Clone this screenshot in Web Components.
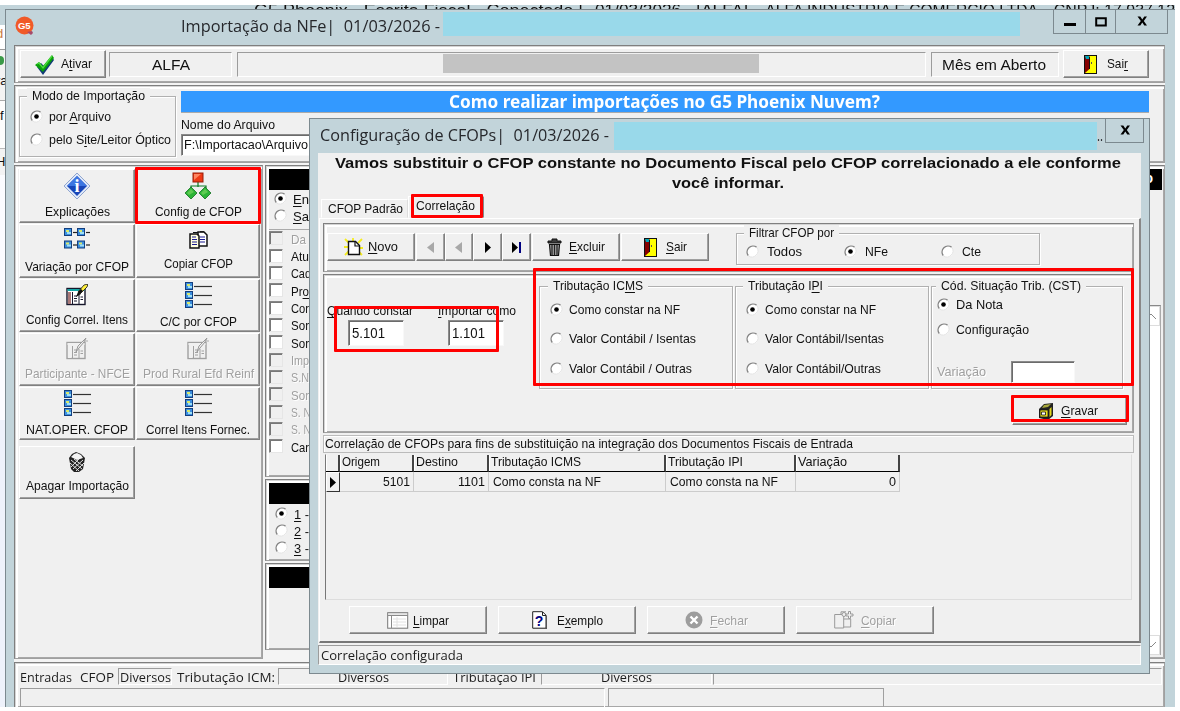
<!DOCTYPE html>
<html lang="pt-BR">
<head>
<meta charset="utf-8">
<title>Importação da NFe</title>
<style>
  html, body { margin: 0; background: #fff; overflow: hidden; }
</style>
</head>
<body>
<erp-desktop></erp-desktop>

<script>
const line3 = `
  ${[1, 10, 19].map((y) => `
    <rect x=".5" y="${y - 0.5}" width="7" height="7" fill="#3c8fe0" stroke="#143f7e"/>
    <rect x="2" y="${y + 1}" width="3" height="2" fill="#d8e86a"/>
    <rect x="3" y="${y + 3}" width="4" height="2" fill="#9fe0f5"/>
    <path d="M9 ${y + 3.5}H27" stroke="#333" stroke-width="1.2"/>`).join("")}`;

const form = (ink, paper, side, head) => `
  <rect x="1" y="4.5" width="18" height="16" fill="${paper}" stroke="${ink}" stroke-width="1.4"/>
  <rect x="1.5" y="5" width="17" height="2" fill="${head}"/>
  <rect x="2" y="8" width="3" height="12" fill="${side}"/>
  <path d="M6.5 8V20M13 11V20M8 12H11M8 14.500H11M8 17H11M14.500 13H17M14.500 15.500H17" stroke="${ink}"/>`;

const ICONS = {
  logo: ["0 0 20 20", `<circle cx="9.500" cy="9.500" r="9" fill="#f05a28"/><path d="M12 16l5-1 1 2-2 2z" fill="#a64a6a"/>
    <text x="9.300" y="13" font-family="Liberation Sans" font-weight="bold" font-size="9.500" text-anchor="middle" fill="#fff">G5</text>`],
  check: ["0 0 20 21", `<path d="M2 13l4-4 3 3L17 3l2 3L8 21z" fill="#123a78"/><path d="M0 11l4-3 4 4L17 1l2 3L8 18z" fill="#0aa00a"/><path d="M2 10l2-1 4 5L17 2" fill="none" stroke="#4bdc3e" stroke-width="1.300"/>`],
  door: ["0 0 13 19", `<rect x=".5" y=".5" width="12" height="18" fill="#ffff00" stroke="#111"/><path d="M1 1h4.500v13L1 18z" fill="#870000"/><path d="M1 1h4v3H2z" fill="#00a6b8"/><path d="M5.500 2v12" stroke="#111"/><rect x="7" y="7" width="1" height="2" fill="#555"/>`],
  info: ["0 0 28 28", `<path d="M14 1L27 14 14 27 1 14z" fill="#dfe8f8" stroke="#8fa5cf"/><path d="M14 4L24 14 14 24 4 14z" fill="#1846b8"/><path d="M14 4L24 14H4z" fill="#3c76e2"/>
    <text x="14" y="20" font-family="Liberation Serif" font-weight="bold" font-size="18" text-anchor="middle" fill="#fff">i</text>`],
  tree: ["0 0 26 28", `<path d="M13 10v5M6 18v-4h15v4" stroke="#0a7a22" stroke-width="1.200" fill="none"/><rect x="8" y="1" width="10" height="9" fill="#ee3a16" stroke="#981c08"/><path d="M9 2h7l-7 6z" fill="#ff8560"/>
    <path d="M6 15l6 6-6 6-6-6zM20 15l6 6-6 6-6-6z" fill="#2cb436" stroke="#117020" stroke-width=".8"/><path d="M6 17l3 3-5 3-2-2zM20 17l3 3-5 3-2-2z" fill="#5fcc52"/>`],
  nodes: ["0 0 27 22", [[0, 0], [13, 0], [0, 12.5], [13, 12.5]].map(([x, y]) => `
    <rect x="${x + 0.5}" y="${y + 0.5}" width="7" height="7" fill="#3c8fe0" stroke="#143f7e"/><rect x="${x + 2}" y="${y + 2}" width="3" height="2" fill="#d8e86a"/><rect x="${x + 3}" y="${y + 4}" width="4" height="2" fill="#9fe0f5"/>
    <path d="M${x + 9} ${y + 4.5}h4" stroke="#222" stroke-width="1.200"/>`).join("")],
  pages: ["0 0 19 18", `<path d="M9 1h6l3 3v11H9z" fill="#fff" stroke="#111" stroke-width="1.500"/><path d="M1 3h7l2 2v12H1z" fill="#ffffe0" stroke="#111" stroke-width="1.500"/><path d="M3 6h4M3 8.500h5M3 11h5M3 13.500h5M11 6h5M11 8.500h5M11 11h5" stroke="#1a1a90" stroke-width="1.200"/><path d="M4 1.500h5M11 .7h4" stroke="#111"/>`],
  form: ["0 0 22 22", form("#16162a", "#fff", "#a87878", "#12a5a5") + `<path d="M10 13l2-5 3 2z" fill="#111"/><path d="M12 8l6-7 4-1-1 3-7 7z" fill="#ffef3c" stroke="#111" stroke-width=".8"/><path d="M12 8l3-3 2 2-3 3z" fill="#111"/>`],
  formOff: ["0 0 22 22", form("#a0a0a0", "#f0f0f0", "#f0f0f0", "#f0f0f0") + `<path d="M10 14l2-6 8-8-2 4-5 6z" fill="#f0f0f0" stroke="#999"/><path d="M18 3h4" stroke="#aaa"/>`],
  list: ["0 0 27 27", line3],
  basket: ["0 0 18 20", `<path d="M1 6l3-4 4-2 5 2 4 4-2 11-4 3H6l-3-3z" fill="#222"/><path d="M3 5l3-3 3-1 4 2 2 3-6 2z" fill="#f4f4f4"/><path d="M3 8l11 9M2 11l9 8M6 7l9 7M15 8L5 17M16 11l-8 8M11 7l-8 8" stroke="#ddd" stroke-width="1"/>`],
  novo: ["0 0 19 19", `<path d="M1 1l4 4M9 0v4M18 1l-4 4M0 9h4M15 10h4M1 17l4-4M18 17l-3-3" stroke="#f5ec20" stroke-width="1.800"/><path d="M4.500 3.500h7l4 4v9h-11z" fill="#fff" stroke="#111" stroke-width="1.400"/><path d="M11 3.500v4.500h4.500" fill="none" stroke="#111" stroke-width="1.200"/>`],
  prevOff: ["0 0 8 11", `<path d="M7 0v11L0 5.500z" fill="#a8a8a8"/>`],
  next: ["0 0 8 11", `<path d="M1 0v11l6-5.500z" fill="#000"/>`],
  last: ["0 0 11 11", `<path d="M1 0v11l6-5.500z" fill="#000"/><path d="M9 0v11" stroke="#000080" stroke-width="2"/>`],
  trash: ["0 0 15 18", `<path d="M5 1h5v2h4v2H1V3h4z" fill="#3c3c3c" stroke="#111"/><path d="M2.500 6.500h10l-1 11h-8z" fill="#aaa" stroke="#111" stroke-width="1.200"/><path d="M5 7v10M7.500 7v10M10 7v10" stroke="#222" stroke-width="1.300"/>`],
  cabinet: ["0 0 16 17", `<path d="M1 6l5-5 9-1v13l-5 4-9-2z" fill="#222"/><path d="M6 2l7-1-3 3-6 1z" fill="#a8a83c"/><path d="M2 7h8v7H2z" fill="#e8e020" stroke="#111" stroke-width=".8"/><path d="M3.500 9h4v3h-4z" fill="#fff" stroke="#111" stroke-width=".8"/><path d="M11.500 6l2-2v8l-2 2z" fill="#e0d81a"/>`],
  sheet: ["0 0 22 17", `<rect x=".7" y=".7" width="20" height="15.500" fill="#fff" stroke="#777"/><path d="M1 3.500H21M4.500 4v12" stroke="#8a8a8a"/><path d="M1.500 2h19" stroke="#ccc"/><path d="M10 5v10M6 7h13M6 10h13M6 13h13" stroke="#e2e2e2"/>`],
  help: ["0 0 15 18", `<path d="M.7.7h9.800l3.500 3.500v13H.7z" fill="#fff" stroke="#222"/><path d="M10.500 1v3.500H14" fill="none" stroke="#222"/><path d="M14.500 5v13H1" stroke="#555" fill="none"/>
    <text x="7" y="14.500" font-family="Liberation Sans" font-weight="bold" font-size="14" text-anchor="middle" fill="#000080">?</text>`],
  closeOff: ["0 0 18 18", `<circle cx="9" cy="9" r="8.500" fill="#9d9d9d"/><path d="M5.500 5.500l7 7M12.500 5.500l-7 7" stroke="#fff" stroke-width="2.400"/>`],
  copyOff: ["0 0 20 18", `<path d="M.7 3.500h9v13.500H.7zM9.700 8h7v8h-7M7 3.500V.8h5" fill="none" stroke="#9a9a9a"/><circle cx="10" cy="3.500" r="2" fill="#f0f0f0" stroke="#9a9a9a"/><path d="M14.500.5h2v2.500h2.500v2h-2.500v2.500h-2V5H12V3h2.500z" fill="#f0f0f0" stroke="#9a9a9a"/>`],
};

class BaseElement extends HTMLElement {
  constructor() {
    super();
    this.attachShadow({ mode: "open" });
  }

  connectedCallback() {
    if (!this._ready) {
      this._ready = true;
      this.shadowRoot.innerHTML = this.template();
    }
    this.ready?.();
  }
}

// Single line of text squeezed or stretched to a given width.
class WinText extends BaseElement {
  template() {
    return `
      <style>
        :host { display: block; flex: none; line-height: 16px; text-align: left; }
        :host([off]) { color: #a0a0a0; text-shadow: 1px 1px #fff; }
        span { display: block; width: max-content; white-space: pre; transform-origin: 0 50%; }
        ::slotted(u) { text-underline-offset: 2px; text-decoration-thickness: 1px; }
      </style>
      <span><slot></slot></span>
    `;
  }

  ready() {
    const width = Number(this.getAttribute("w"));
    if (!width) return;
    const span = this.shadowRoot.querySelector("span");
    span.style.transform = "";
    const natural = span.getBoundingClientRect().width;
    this.style.width = `${width}px`;
    if (natural) span.style.transform = `scaleX(${width / natural})`;
  }
}

class WinIcon extends BaseElement {
  template() {
    const [box, body] = ICONS[this.getAttribute("name")];
    const [, , w, h] = box.split(" ");
    return `
      <style>
        :host { display: block; flex: none; }
        svg { display: block; }
      </style>
      <svg width="${w}" height="${h}" viewBox="${box}">${body}</svg>
    `;
  }
}

class WinPanel extends BaseElement {
  template() {
    return `
      <style>
        :host {
          display: block;
          box-sizing: border-box;
          border: 1px solid #7f7f7f;
          border-right-color: #a0a0a0;
          border-bottom-color: #a0a0a0;
          background: #f0f0f0;
          box-shadow: inset 1px 1px #d4d4d4, inset 3px 3px #fff, inset -1px -1px #a8a8a8;
        }
      </style>
      <slot></slot>
    `;
  }
}

class WinField extends BaseElement {
  template() {
    return `
      <style>
        :host {
          display: flex;
          align-items: center;
          box-sizing: border-box;
          flex: none;
          border: 1px solid;
          border-color: #9c9c9c #fff #fff #9c9c9c;
        }
        :host([edit]) {
          background: #fff;
          border-color: #8a8a8a #f8f8f8 #f8f8f8 #8a8a8a;
          box-shadow: inset 1px 1px #6b6b6b;
        }
      </style>
      <slot></slot>
    `;
  }
}

class WinButton extends BaseElement {
  template() {
    return `
      <style>
        :host {
          display: flex;
          align-items: center;
          justify-content: center;
          box-sizing: border-box;
          flex: none;
          height: 28px;
          gap: 7px;
          background: #f0f0f0;
          border: 1px solid;
          border-color: #fff #808080 #808080 #fff;
          box-shadow: inset -1px -1px #a0a0a0;
        }
        :host([stack]) { flex-direction: column; height: auto; gap: 5px; }
      </style>
      <slot></slot>
    `;
  }
}

class WinRadio extends BaseElement {
  template() {
    const dot = this.hasAttribute("checked") ? `<circle cx="6.500" cy="6.500" r="2.300" fill="#000"/>` : "";
    return `
      <style>
        :host { display: flex; align-items: center; gap: 6px; height: 16px; flex: none; }
        svg { display: block; flex: none; margin-top: -2px; }
      </style>
      <svg width="13" height="13" viewBox="0 0 13 13">
        <circle cx="6.500" cy="6.500" r="5.500" fill="#fff"/>
        <path d="M2.300 10.700A6 6 0 0 1 10.700 2.300" fill="none" stroke="#858585" stroke-width="1.400"/>
        <path d="M10.700 2.300A6 6 0 0 1 2.300 10.700" fill="none" stroke="#e4e4e4"/>
        ${dot}
      </svg>
      <slot></slot>
    `;
  }
}

class WinCheck extends BaseElement {
  template() {
    return `
      <style>
        :host { display: flex; align-items: center; gap: 8px; height: 17.35px; }
        i {
          width: 12px; height: 12px; flex: none; background: #fff; margin-top: -3px;
          border: 1px solid; border-color: #868686 #e6e6e6 #e6e6e6 #868686;
          box-shadow: inset 1px 1px #777;
        }
        :host([off]) { color: #a0a0a0; }
        :host([off]) i { background: #f0f0f0; }
      </style>
      <i></i><slot></slot>
    `;
  }
}

class WinGroup extends BaseElement {
  template() {
    return `
      <style>
        :host {
          display: block;
          position: relative;
          box-sizing: border-box;
          flex: none;
          border: 1px solid #b0b0b0;
          box-shadow: inset 1px 1px #fff, 1px 1px #fff;
        }
        .legend { position: absolute; left: var(--legend, 8px); top: -9px; padding: 0 5px; background: #f0f0f0; height: 16px; }
      </style>
      <div class="legend"><slot name="legend"></slot></div>
      <slot></slot>
    `;
  }
}

class WinFrame extends BaseElement {
  template() {
    return `
      <style>
        :host {
          display: flex;
          flex-direction: column;
          box-sizing: border-box;
          position: absolute;
          overflow: hidden;
          background: #c2d4da;
          border: 1px solid #7c898f;
        }
        .bar {
          display: flex;
          flex: none;
          align-items: flex-start;
          height: var(--bar, 34px);
          font-family: "Open Sans", sans-serif;
          font-size: 17px;
          color: #26282c;
        }
        .controls { display: flex; margin: -1px 5px 0 auto; }
      </style>
      <div class="bar"><slot name="title"></slot><div class="controls"><slot name="controls"></slot></div></div>
      <slot></slot>
    `;
  }
}

class CaptionButton extends BaseElement {
  template() {
    const shapes = {
      min: `<path d="M0 8.500h12" stroke="#000" stroke-width="3"/>`,
      max: `<path d="M1.200 2.200h9.600v7.200H1.200z" fill="none" stroke="#000" stroke-width="2"/>`,
      close: `<path d="M1.500.5h2.800l2 3 2-3H11L7.800 5 11 9.500H8.300l-2-3-2 3H1.500L4.800 5z" fill="#000"/>`,
    };
    return `
      <style>
        :host {
          display: flex; align-items: center; justify-content: center;
          box-sizing: border-box; height: 25px; margin-left: -1px; border: 1px solid #7c898f;
        }
      </style>
      <svg width="12" height="12" viewBox="0 0 12 12">${shapes[this.getAttribute("kind")]}</svg>
    `;
  }
}

class MarkFrame extends BaseElement {
  template() {
    return `
      <style>
        :host { display: block; position: absolute; box-sizing: border-box; border: 3px solid #ff0000; border-radius: 1px; }
      </style>
    `;
  }
}

class ImportView extends BaseElement {
  template() {
    const tools = [
      ["info", "Explicações", 65, 4], ["tree", "Config de CFOP", 87, 4],
      ["nodes", "Variação por CFOP", 104, 9], ["pages", "Copiar CFOP", 69, 7],
      ["form", "Config Correl. Itens", 102, 6], ["list", "C/C por CFOP", 77, 5],
      ["formOff", "Participante - NFCE", 105, 6, "off"], ["formOff", "Prod Rural Efd Reinf", 111, 6, "off"],
      ["list", "NAT.OPER. CFOP", 102, 5], ["list", "Correl Itens Fornec.", 104, 5],
      ["basket", "Apagar Importação", 103, 6],
    ];
    const options = [
      ["Da", 15, "off"], ["Atu", 18], ["Cad", 20], ["Pr<u>o</u>", 18], ["Cor", 18], ["Sor", 18], ["Sor", 18],
      ["Imp", 18, "off"], ["S.N", 18, "off"], ["Sor", 18, "off"], ["S. N", 20, "off"], ["S. N", 20, "off"], ["Car", 18],
    ];
    return `
      <style>
        :host { display: flex; flex-direction: column; width: 1151px; height: 663px; margin-left: 8px; flex: none; background: #f4f4f4; gap: 2px; }
        .toolbar { display: flex; height: 38px; padding: 4px 0 0 5px; align-items: flex-start; flex: none; }
        .toolbar win-field { height: 25px; margin-top: 2px; justify-content: center; font-size: 14px; }
        .hidden-value { width: 316px; height: 19px; background: #c3c3c3; margin: 0 0 2px 38px; }
        .source { display: flex; height: 78px; padding: 5px 0 0 4px; flex: none; }
        .source win-group { width: 157px; height: 61px; margin-top: 5px; padding: 12px 0 0 10px; --legend: 7px; }
        .source win-radio { margin-bottom: 7px; }
        .file { display: flex; flex-direction: column; width: 968px; margin-left: 5px; }
        .banner { display: flex; justify-content: center; height: 22px; background: #39f; color: #fff; font: bold 17px "Noto Sans", sans-serif; border-bottom: 1px solid #aaa; box-sizing: border-box; }
        .banner win-text { line-height: 21px; margin-left: -2px; }
        .main { display: flex; gap: 2px; height: 494px; flex: none; }
        .tools { width: 249px; padding: 3px 0 0 4px; }
        .grid { display: grid; grid-template-columns: 116px 124px; grid-template-rows: 54px 54px 53px 53px 53px 53px; gap: 1px; }
        .grid > :last-child { margin-top: 5px; margin-bottom: -5px; }
        .middle { display: flex; flex-direction: column; width: 236px; gap: 2px; }
        .middle win-panel { padding: 3px; }
        .band { background: #000; height: 21px; }
        .middle win-radio { margin-left: 5px; height: 17px; }
        .checks { border-top: 1px solid #aaa; margin-top: 4px; padding-top: 1px; }
        .right { flex: 1; padding: 3px 2px 3px 3px; display: flex; flex-direction: column; }
        .right .band { color: #fff; font: bold 14px "Liberation Sans", sans-serif; text-align: right; padding-right: 9px; line-height: 19px; }
        .list { flex: 1; margin: 115px 1px 0 0; background: #fff; border-top: 1px solid #888; border-right: 1px solid #aaa; display: flex; flex-direction: column; justify-content: space-between; align-items: flex-end; }
        .list svg { display: block; border: 1px solid #ddd; }
        .status { flex: 1; margin-top: 1px; padding: 4px 0 0 4px; font: 13px "Open Sans", sans-serif; color: #1c1c1c; }
        .row { display: flex; height: 19px; align-items: center; }
        .row win-field { height: 17px; }
        .row + .row { margin-top: 2px; }
        .row + .row win-field { height: 20px; }
      </style>
      <win-panel class="toolbar">
        <win-button style="width:86px;gap:6px"><win-icon name="check"></win-icon><win-text w="31">A<u>t</u>ivar</win-text></win-button>
        <win-field style="width:123px;margin-left:3px"><win-text w="38">ALFA</win-text></win-field>
        <win-field style="width:689px;margin-left:5px"><div class="hidden-value"></div></win-field>
        <win-field style="width:128px;margin-left:5px"><win-text w="104" style="margin-left:-2px">Mês em Aberto</win-text></win-field>
        <win-button style="width:86px;margin-left:4px;gap:10px"><win-icon name="door"></win-icon><win-text w="21">Sai<u>r</u></win-text></win-button>
      </win-panel>

      <win-panel class="source">
        <win-group>
          <win-text slot="legend" w="113">Modo de Importação</win-text>
          <win-radio checked><win-text w="62">por <u>A</u>rquivo</win-text></win-radio>
          <win-radio><win-text w="122">pelo S<u>i</u>te/Leitor Óptico</win-text></win-radio>
        </win-group>
        <div class="file">
          <div class="banner"><win-text w="431">Como realizar importações no G5 Phoenix Nuvem?</win-text></div>
          <win-text w="94" style="margin:4px 0 1px 0">Nome do Arquivo</win-text>
          <win-field edit style="height:22px;padding-left:2px"><win-text w="124">F:\\Importacao\\Arquivo</win-text></win-field>
        </div>
      </win-panel>

      <div class="main">
        <win-panel class="tools">
          <div class="grid">
            ${tools.map(([icon, label, w, gap, off]) => `
              <win-button stack style="gap:${gap}px"><win-icon name="${icon}"></win-icon><win-text w="${w}" ${off || ""}>${label}</win-text></win-button>`).join("")}
          </div>
        </win-panel>
        <div class="middle">
          <win-panel style="height:312px">
            <div class="band"></div>
            <win-radio checked style="margin-top:1px"><win-text w="16"><u>E</u>n</win-text></win-radio>
            <win-radio><win-text w="16"><u>S</u>a</win-text></win-radio>
            <div class="checks">
              ${options.map(([label, w, off]) => `<win-check ${off || ""}><win-text w="${w}" ${off || ""}>${label}</win-text></win-check>`).join("")}
            </div>
          </win-panel>
          <win-panel style="height:82px">
            <div class="band" style="margin-bottom:2px"></div>
            <win-radio checked style="margin-left:6px"><win-text w="15"><u>1</u> -</win-text></win-radio>
            <win-radio style="margin-left:6px"><win-text w="15"><u>2</u> -</win-text></win-radio>
            <win-radio style="margin-left:6px"><win-text w="15"><u>3</u> -</win-text></win-radio>
          </win-panel>
          <win-panel style="height:87px"><div class="band"></div></win-panel>
        </div>
        <win-panel class="right">
          <div class="band">o</div>
          <div class="list">
            <svg width="16" height="18"><path d="M3 12l5-5 5 5" fill="none" stroke="#888"/></svg>
            <svg width="16" height="18"><path d="M3 6l5 5 5-5" fill="none" stroke="#888"/></svg>
          </div>
        </win-panel>
      </div>

      <win-panel class="status">
        <div class="row">
          <win-text w="52" style="margin-left:1px">Entradas</win-text>
          <win-text w="34" style="margin-left:8px">CFOP</win-text>
          <win-field style="width:54px;margin-left:4px;padding-left:1px"><win-text w="51">Diversos</win-text></win-field>
          <win-text w="98" style="margin-left:5px">Tributação ICM:</win-text>
          <win-field style="width:170px;margin-left:3px;justify-content:center"><win-text w="51">Diversos</win-text></win-field>
          <win-text w="83" style="margin-left:5px">Tributação IPI</win-text>
          <win-field style="width:171px;margin-left:5px;justify-content:center"><win-text w="51">Diversos</win-text></win-field>
          <win-field style="width:449px;margin-left:1px"></win-field>
        </div>
        <div class="row">
          <win-field style="width:585px;margin-left:1px"></win-field>
          <win-field style="width:276px;margin-left:3px;border-color:#a0a0a0"></win-field>
        </div>
      </win-panel>
    `;
  }
}

class CfopView extends BaseElement {
  template() {
    return `
      <style>
        :host { display: flex; flex-direction: column; flex: none; margin: 0 8px; height: 512px; background: #f0f0f0; }
        .intro { display: flex; flex-direction: column; align-items: center; height: 42px; padding-right: 3px; font: bold 15px "Liberation Sans", sans-serif; flex: none; }
        .intro win-text { line-height: 20px; }
        .tabs { display: flex; align-items: flex-end; height: 23px; padding-left: 3px; flex: none; }
        .tab { display: flex; box-sizing: border-box; width: 87px; height: 19px; padding: 1px 0 0 6px; border: 1px solid; border-color: #fff #ddd transparent #fff; }
        .tab.active { width: 76px; height: 22px; padding: 1px 0 0 7px; border-right-color: #888; }
        .page { height: 425px; box-sizing: border-box; border: 1px solid #fff; border-right: 2px solid #888; border-bottom: 2px solid #777; margin-left: 1px; padding: 4px 5px 0 3px; flex: none; }
        .nav { display: flex; height: 49px; padding: 9px 0 0 3px; }
        .nav win-group { width: 304px; height: 32px; margin-left: 27px; display: flex; padding: 10px 0 0 9px; --legend: 7px; }
        .nav win-radio { gap: 8px; }
        .form { display: flex; height: 159px; margin-top: 2px; padding: 11px 0 0 3px; }
        .code { display: flex; flex-direction: column; padding-top: 17px; }
        .code win-field { width: 56px; height: 26px; font-size: 15px; padding-left: 3px; margin: 1px 0 0; }
        .form win-group { width: 194px; height: 103px; }
        .form win-group win-radio { margin-left: 10px; }
        .right { display: flex; flex-direction: column; align-items: flex-end; width: 192px; margin-left: 2px; }
        .right win-group { width: 192px; --legend: 4px; }
        .caption { display: flex; height: 18px; margin-top: 2px; box-sizing: border-box; border: 1px solid #bbb; box-shadow: inset 1px 1px #fff; padding-left: 1px; }
        .table { margin: 1px 2px 0; height: 146px; box-sizing: border-box; border: 1px solid; border-color: transparent #ddd #ddd #777; }
        .line { display: grid; grid-template-columns: 14px 74px 75px 177px 130px 104px; width: 574px; }
        .line > * { box-sizing: border-box; display: flex; border-right: 1px solid #ccc; padding-left: 4px; }
        .head > * { height: 17px; border-right: 2px solid #444; border-bottom: 1px solid #000; box-shadow: inset 1px 0 #fff; padding-left: 2px; }
        .head win-text { margin-top: -1px; }
        .body > * { height: 20px; padding-top: 2px; border-bottom: 1px solid #ccc; }
        .line .num { justify-content: flex-end; padding-right: 3px; }
        .body > :first-child { border: 1px solid #333; border-color: #fff #333 #333 #fff; padding: 4px 0 0 2px; }
        .actions { display: flex; gap: 11px; margin: 6px 0 0 26px; }
        .actions win-button { width: 138px; }
        .actions win-text { margin-top: 2px; }
        .status { height: 20px; margin: 2px 0 0; padding-left: 2px; font: 13px "Open Sans", sans-serif; color: #1c1c1c; }
      </style>
      <div class="intro">
        <win-text w="786">Vamos substituir o CFOP constante no Documento Fiscal pelo CFOP correlacionado a ele conforme</win-text>
        <win-text w="112">você informar.</win-text>
      </div>
      <div class="tabs">
        <div class="tab"><win-text w="75">CFOP Padrão</win-text></div>
        <div class="tab active"><win-text w="59">Correlação</win-text></div>
      </div>
      <div class="page">
        <win-panel class="nav">
          <win-button style="width:88px;gap:5px"><win-icon name="novo"></win-icon><win-text w="30"><u>N</u>ovo</win-text></win-button>
          <win-button style="width:29px;margin-left:1px"><win-icon name="prevOff"></win-icon></win-button>
          <win-button style="width:28px"><win-icon name="prevOff"></win-icon></win-button>
          <win-button style="width:29px"><win-icon name="next"></win-icon></win-button>
          <win-button style="width:29px"><win-icon name="last"></win-icon></win-button>
          <win-button style="width:88px;margin-left:1px"><win-icon name="trash"></win-icon><win-text w="36"><u>E</u>xcluir</win-text></win-button>
          <win-button style="width:88px;margin-left:1px;gap:9px"><win-icon name="door"></win-icon><win-text w="21"><u>S</u>air</win-text></win-button>
          <win-group>
            <win-text slot="legend" w="85">Filtrar CFOP por</win-text>
            <win-radio><win-text w="35">Todos</win-text></win-radio>
            <win-radio checked style="margin-left:42px"><win-text w="23">NFe</win-text></win-radio>
            <win-radio style="margin-left:53px"><win-text w="19">Cte</win-text></win-radio>
          </win-group>
        </win-panel>

        <win-panel class="form">
          <div class="code" style="width:111px">
            <win-text w="86"><u>Q</u>uando constar</win-text>
            <win-field edit style="margin-left:21px"><win-text w="33">5.101</win-text></win-field>
          </div>
          <div class="code" style="width:101px">
            <win-text w="78"><u>I</u>mportar como</win-text>
            <win-field edit style="margin-left:10px"><win-text w="33">1.101</win-text></win-field>
          </div>
          <win-group>
            <win-text slot="legend" w="90">Tributação IC<u>M</u>S</win-text>
            <win-radio checked style="margin-top:15px"><win-text w="111">Como constar na NF</win-text></win-radio>
            <win-radio style="margin-top:13px"><win-text w="127">Valor Contábil / Isentas</win-text></win-radio>
            <win-radio style="margin-top:14px"><win-text w="123">Valor Contábil / Outras</win-text></win-radio>
          </win-group>
          <win-group style="margin-left:2px;--legend:7px">
            <win-text slot="legend" w="75">Tributação I<u>P</u>I</win-text>
            <win-radio checked style="margin-top:15px"><win-text w="111">Como constar na NF</win-text></win-radio>
            <win-radio style="margin-top:13px"><win-text w="119">Valor Contábil/Isentas</win-text></win-radio>
            <win-radio style="margin-top:14px"><win-text w="116">Valor Contábil/Outras</win-text></win-radio>
          </win-group>
          <div class="right">
            <win-group>
              <win-text slot="legend" w="140">Cód. Situação Trib. (CST)</win-text>
              <win-radio checked style="margin:10px 0 0 5px"><win-text w="47">Da Nota</win-text></win-radio>
              <win-radio style="margin:9px 0 0 5px"><win-text w="73">Configuração</win-text></win-radio>
              <div style="display:flex;align-items:center;margin:23px 0 0 5px">
                <win-text w="49" off>Variação</win-text>
                <win-field edit style="width:64px;height:22px;margin-left:25px"></win-field>
              </div>
            </win-group>
            <win-button style="width:115px;margin:8px -4px 0 0"><win-icon name="cabinet"></win-icon><win-text w="37" style="margin-right:3px"><u>G</u>ravar</win-text></win-button>
          </div>
        </win-panel>

        <div class="caption"><win-text w="528">Correlação de CFOPs para fins de substituição na integração dos Documentos Fiscais de Entrada</win-text></div>
        <div class="table">
          <div class="line head">
            <div></div>
            <div><win-text w="38">Origem</win-text></div>
            <div><win-text w="42">Destino</win-text></div>
            <div><win-text w="90">Tributação ICMS</win-text></div>
            <div><win-text w="75">Tributação IPI</win-text></div>
            <div><win-text w="49">Variação</win-text></div>
          </div>
          <div class="line body">
            <div><win-icon name="next"></win-icon></div>
            <div class="num"><win-text w="27">5101</win-text></div>
            <div class="num"><win-text w="27">1101</win-text></div>
            <div><win-text w="108">Como consta na NF</win-text></div>
            <div><win-text w="108">Como consta na NF</win-text></div>
            <div class="num"><win-text w="7">0</win-text></div>
          </div>
        </div>
        <div class="actions">
          <win-button style="gap:4px"><win-icon name="sheet"></win-icon><win-text w="36"><u>L</u>impar</win-text></win-button>
          <win-button style="gap:10px"><win-icon name="help"></win-icon><win-text w="46">E<u>x</u>emplo</win-text></win-button>
          <win-button><win-icon name="closeOff"></win-icon><win-text w="38" off><u>F</u>echar</win-text></win-button>
          <win-button><win-icon name="copyOff"></win-icon><win-text w="35" off><u>C</u>opiar</win-text></win-button>
        </div>
      </div>
      <win-field class="status"><win-text w="142">Correlação configurada</win-text></win-field>
    `;
  }
}

class ErpDesktop extends BaseElement {
  template() {
    return `
      <style>
        :host {
          display: block; position: relative; overflow: hidden;
          width: 1175px; height: 702px; margin-top: 5px;
          background: linear-gradient(#c2d4da 20px, #fff 20px 44px, #999 44px 45px, #f3f3f3 45px 95px, #aaa 95px 96px, #fdfdfd 96px 143px, #bbb 143px 144px, #f3f3f3 144px 170px, #fbfcff 170px 415px, #eef2fb 415px);
          font: 13px "Liberation Sans", Arial, sans-serif;
          color: #111;
        }
        .caption { display: flex; padding-left: 254px; font-size: 16px; }
        .caption win-text { line-height: 11px; height: 11px; }
        .edge { display: flex; flex-direction: column; width: 5px; overflow: hidden; padding-top: 10px; }
        .edge b { display: block; font-weight: normal; line-height: 16px; text-indent: -4px; }
        .cover { background: #99d9ea; flex: none; }
      </style>
      <div class="caption">
        <win-text w="329">G5 Phoenix - Escrita Fiscal - Conectado |</win-text>
        <win-text w="153" style="margin-left:12px">01/03/2026 - [ALFA]</win-text>
        <win-text w="290">  - ALFA INDUSTRIA E COMERCIO LTDA</win-text>
        <win-text w="131" style="margin-left:6px">- CNPJ: 17.937.12</win-text>
      </div>
      <div class="edge">
        <b style="color:#c87840">d</b>
        <b style="margin-top:14px;width:4px;height:9px;background:#3a9a48;border-radius:0 4px 4px 0"></b>
        <b style="margin-top:8px">ra</b>
        <b style="margin-top:19px;text-indent:0">f</b>
        <b style="margin-top:30px">H</b>
      </div>

      <win-frame style="left:5px;top:4px;width:1175px;height:720px;--bar:35px">
        <div slot="title" style="display:flex;align-items:flex-start">
          <win-icon name="logo" style="margin:6px 0 0 9px"></win-icon>
          <win-text w="259" style="margin:8px 3px 0 146px">Importação da NFe|  01/03/2026 -</win-text>
          <div class="cover" style="width:577px;height:24px;margin-top:2px"></div>
        </div>
        <caption-button slot="controls" kind="min" style="width:33px"></caption-button>
        <caption-button slot="controls" kind="max" style="width:31px"></caption-button>
        <caption-button slot="controls" kind="close" style="width:53px;margin-right:6px"></caption-button>
        <import-view></import-view>
      </win-frame>

      <win-frame style="left:309px;top:113px;width:841px;height:556px">
        <div slot="title" style="display:flex;align-items:flex-start">
          <win-text w="289" style="margin:8px 5px 0 10px">Configuração de CFOPs|  01/03/2026 -</win-text>
          <div class="cover" style="width:483px;height:28px;margin-top:3px"></div>
          <win-text w="6" style="margin-top:8px">..</win-text>
        </div>
        <caption-button slot="controls" kind="close" style="width:39px"></caption-button>
        <cfop-view></cfop-view>
      </win-frame>

      <mark-frame style="left:135px;top:162px;width:126px;height:57px"></mark-frame>
      <mark-frame style="left:411px;top:189px;width:72px;height:24px"></mark-frame>
      <mark-frame style="left:334px;top:301px;width:165px;height:46px"></mark-frame>
      <mark-frame style="left:533px;top:263px;width:601px;height:118px"></mark-frame>
      <mark-frame style="left:1011px;top:390px;width:118px;height:27px"></mark-frame>
    `;
  }
}

customElements.define("win-text", WinText);
customElements.define("win-icon", WinIcon);
customElements.define("win-panel", WinPanel);
customElements.define("win-field", WinField);
customElements.define("win-button", WinButton);
customElements.define("win-radio", WinRadio);
customElements.define("win-check", WinCheck);
customElements.define("win-group", WinGroup);
customElements.define("win-frame", WinFrame);
customElements.define("caption-button", CaptionButton);
customElements.define("mark-frame", MarkFrame);
customElements.define("import-view", ImportView);
customElements.define("cfop-view", CfopView);
customElements.define("erp-desktop", ErpDesktop);
</script>
</body>
</html>
